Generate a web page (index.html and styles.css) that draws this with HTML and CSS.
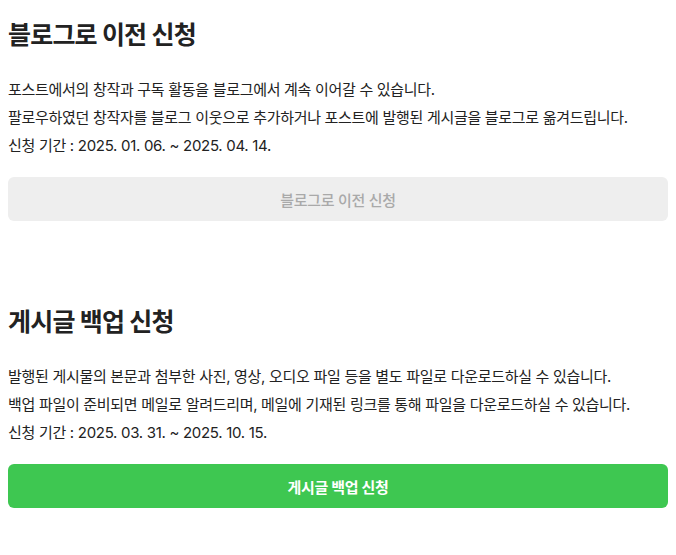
FILE: index.html
```html
<!DOCTYPE html>
<html lang="ko">
<head>
  <meta charset="UTF-8">
  <meta name="viewport" content="width=device-width, initial-scale=1.0">
  <title>블로그 이전 신청</title>
  <link rel="stylesheet" href="styles.css">
</head>
<body>
  <section class="apply-section">
    <h2 class="apply-title">블로그로 이전 신청</h2>
    <div class="apply-desc">
      <p>포스트에서의 창작과 구독 활동을 블로그에서 계속 이어갈 수 있습니다.</p>
      <p>팔로우하였던 창작자를 블로그 이웃으로 추가하거나 포스트에 발행된 게시글을 블로그로 옮겨드립니다.</p>
      <p>신청 기간 : 2025. 01. 06. ~ 2025. 04. 14.</p>
    </div>
    <button class="apply-button" disabled>블로그로 이전 신청</button>
  </section>

  <section class="apply-section">
    <h2 class="apply-title">게시글 백업 신청</h2>
    <div class="apply-desc">
      <p>발행된 게시물의 본문과 첨부한 사진, 영상, 오디오 파일 등을 별도 파일로 다운로드하실 수 있습니다.</p>
      <p>백업 파일이 준비되면 메일로 알려드리며, 메일에 기재된 링크를 통해 파일을 다운로드하실 수 있습니다.</p>
      <p>신청 기간 : 2025. 03. 31. ~ 2025. 10. 15.</p>
    </div>
    <button class="apply-button active">게시글 백업 신청</button>
  </section>
</body>
</html>
```

FILE: styles.css
```css
body {
  margin: 0;
  padding: 20px 8px;
  font-family: Inter, "Noto Sans CJK KR", sans-serif;
  color: #222;
}
.apply-section + .apply-section { margin-top: 86px; }
.apply-title {
  margin: 0 0 26px;
  font-size: 25px;
  line-height: 30px;
  font-weight: 700;
  letter-spacing: -0.8px;
}
.apply-desc p {
  margin: 0;
  font-size: 15px;
  line-height: 28px;
  letter-spacing: -0.3px;
}
.apply-button {
  display: block;
  width: 100%;
  height: 44px;
  margin-top: 17px;
  border: none;
  border-radius: 6px;
  background-color: #3ec751;
  color: #fff;
  font-family: inherit;
  font-size: 15px;
  font-weight: 700;
  letter-spacing: -0.3px;
  cursor: pointer;
}
.apply-button:disabled {
  background-color: #eeeeee;
  color: #a9a9a9;
  font-weight: 500;
  cursor: default;
}
```
